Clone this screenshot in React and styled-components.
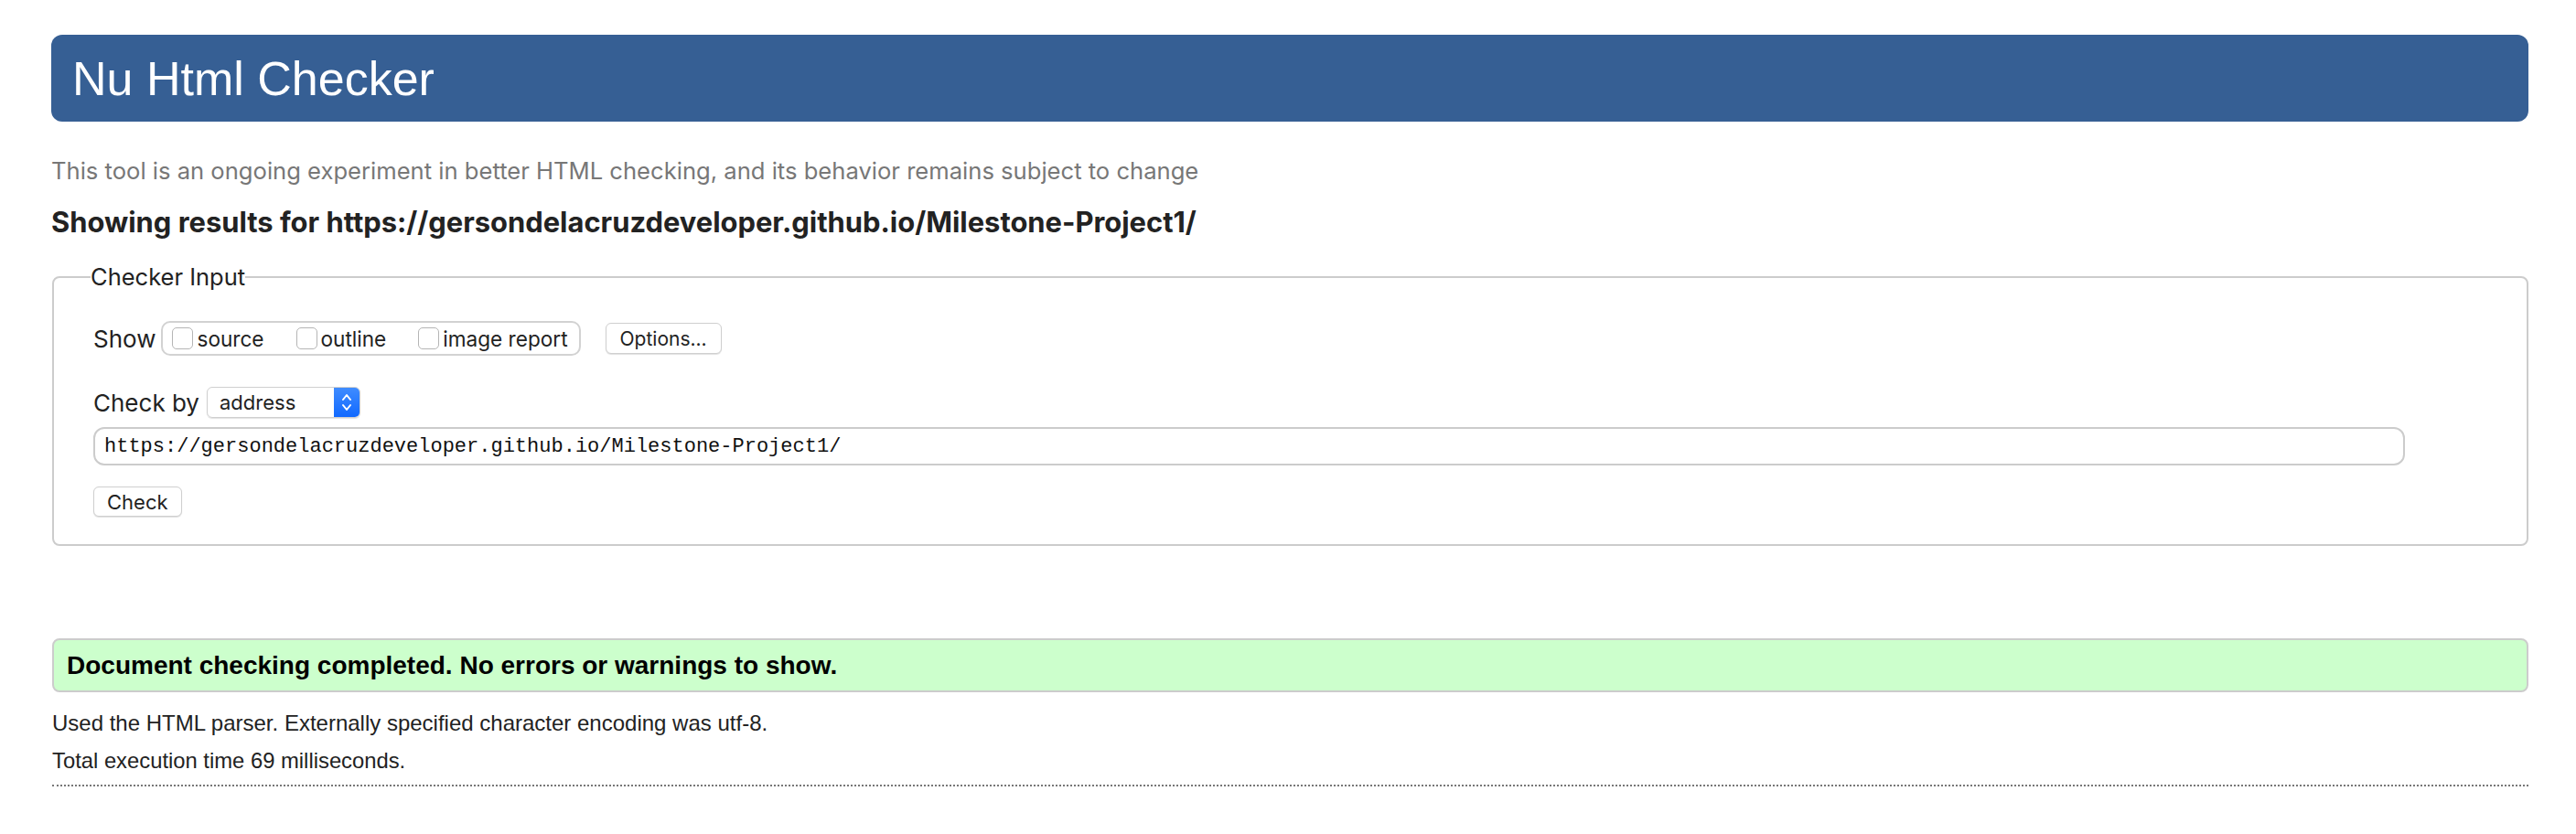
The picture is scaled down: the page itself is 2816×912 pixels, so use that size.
import React from "react";
import styled, { createGlobalStyle } from "styled-components";

const GlobalStyle = createGlobalStyle`
  html, body {
    margin: 0;
    padding: 0;
    background: #fff;
  }
  body {
    font-family: "Liberation Sans", Arial, sans-serif;
    color: #222;
  }
`;

const Page = styled.div`
  padding: 38px 52px 40px 56px;
`;

const Banner = styled.header`
  display: flex;
  align-items: center;
  height: 95px;
  padding-left: 23px;
  background: #365f94;
  border-radius: 12px;
`;

const BannerTitle = styled.h1`
  margin: 0;
  font-family: "Liberation Sans", Arial, sans-serif;
  font-weight: 400;
  font-size: 52px;
  line-height: 1;
  color: #fff;
`;

const Intro = styled.p`
  margin: 39px 0 0;
  font-family: Inter, "Liberation Sans", sans-serif;
  font-size: 25.6px;
  line-height: 30px;
  color: #777;
`;

const ResultsFor = styled.h2`
  margin: 23px 0 0;
  font-family: Inter, "Liberation Sans", sans-serif;
  font-weight: 700;
  font-size: 30.9px;
  line-height: 36px;
  color: #222;
`;

const InputSet = styled.fieldset`
  margin: 27px 0 0 1px;
  padding: 0 40px 30px 43px;
  border: 2px solid #ccc;
  border-radius: 8px;
  font-family: Inter, "Liberation Sans", sans-serif;
  color: #222;
`;

const Legend = styled.legend`
  margin-left: -3px;
  padding: 0;
  font-size: 25.5px;
  line-height: 30px;
`;

const Row = styled.div`
  display: flex;
  align-items: center;
  margin-top: ${(p) => p.$top || 0}px;
`;

const Label = styled.span`
  font-size: 26px;
  margin-right: ${(p) => p.$gap || 6}px;
`;

const ShowGroup = styled.div`
  display: flex;
  align-items: center;
  height: 38px;
  box-sizing: border-box;
  padding: 0 12px 0 10px;
  border: 2px solid #d2d2d2;
  border-radius: 10px;
`;

const Choice = styled.label`
  display: flex;
  align-items: center;
  font-size: 22.6px;
  margin-right: ${(p) => (p.$last ? 0 : 35)}px;
`;

const Box = styled.span`
  width: 21px;
  height: 22px;
  margin-right: 4px;
  border: 1px solid #b5b5b5;
  border-radius: 5px;
  background: #fff;
`;

const Button = styled.button`
  height: ${(p) => p.$h || 34}px;
  padding: 0 ${(p) => p.$pad || 14}px;
  margin-left: ${(p) => p.$left || 0}px;
  border: 1px solid #cfcfcf;
  border-radius: 6px;
  background: #fff;
  box-shadow: 0 1px 1px rgba(0, 0, 0, 0.12);
  font-family: Inter, "Liberation Sans", sans-serif;
  font-size: ${(p) => p.$size || 22}px;
  color: #222;
`;

const Select = styled.div`
  display: flex;
  width: 168px;
  height: 34px;
  box-sizing: border-box;
  border: 1px solid #cfcfcf;
  border-radius: 6px;
  box-shadow: 0 1px 1px rgba(0, 0, 0, 0.12);
  overflow: hidden;
`;

const SelectText = styled.span`
  flex: 1;
  display: flex;
  align-items: center;
  padding-left: 13px;
  font-size: 22px;
`;

const Stepper = styled.span`
  width: 28px;
  display: flex;
  align-items: center;
  justify-content: center;
  background: linear-gradient(#3f8cff, #1169ff);
`;

const UrlInput = styled.div`
  display: flex;
  align-items: center;
  width: 2527px;
  height: 42px;
  box-sizing: border-box;
  margin-top: 10px;
  padding-left: 10px;
  border: 2px solid #ccc;
  border-radius: 12px;
  font-family: "Liberation Mono", "DejaVu Sans Mono", monospace;
  font-size: 22px;
  color: #111;
`;

const Success = styled.div`
  margin-top: 101px;
  height: 59px;
  box-sizing: border-box;
  display: flex;
  align-items: center;
  padding-left: 14px;
  margin-left: 1px;
  background: #ccffcc;
  border: 2px solid #ccc;
  border-radius: 8px;
  font-weight: 700;
  font-size: 28px;
  color: #000;
`;

const Note = styled.p`
  margin: ${(p) => p.$top}px 0 0 1px;
  font-size: ${(p) => p.$size}px;
  line-height: 26px;
  color: #222;
`;

const Rule = styled.hr`
  margin: 13px 0 0 1px;
  border: 0;
  border-top: 2px dotted #777;
`;

function Chevrons() {
  return (
    <svg width="12" height="24" viewBox="0 0 12 24" fill="none">
      <path d="M2 9 L6 4 L10 9" stroke="#fff" strokeWidth="2" strokeLinecap="round" strokeLinejoin="round" />
      <path d="M2 15 L6 20 L10 15" stroke="#fff" strokeWidth="2" strokeLinecap="round" strokeLinejoin="round" />
    </svg>
  );
}

export default function App() {
  return (
    <Page>
      <GlobalStyle />
      <Banner>
        <BannerTitle>Nu Html Checker</BannerTitle>
      </Banner>
      <Intro>
        This tool is an ongoing experiment in better HTML checking, and its behavior remains subject to change
      </Intro>
      <ResultsFor>Showing results for https://gersondelacruzdeveloper.github.io/Milestone-Project1/</ResultsFor>

      <InputSet>
        <Legend>Checker Input</Legend>
        <Row $top={33}>
          <Label>Show</Label>
          <ShowGroup>
            <Choice>
              <Box />
              source
            </Choice>
            <Choice>
              <Box />
              outline
            </Choice>
            <Choice $last>
              <Box />
              image report
            </Choice>
          </ShowGroup>
          <Button $left={27} $pad={15} $size={21}>Options...</Button>
        </Row>
        <Row $top={34}>
          <Label $gap={8}>Check by</Label>
          <Select>
            <SelectText>address</SelectText>
            <Stepper>
              <Chevrons />
            </Stepper>
          </Select>
        </Row>
        <UrlInput>https://gersondelacruzdeveloper.github.io/Milestone-Project1/</UrlInput>
        <Row $top={23}>
          <Button $h={33}>Check</Button>
        </Row>
      </InputSet>

      <Success>Document checking completed. No errors or warnings to show.</Success>
      <Note $top={21} $size={24}>Used the HTML parser. Externally specified character encoding was utf-8.</Note>
      <Note $top={15} $size={23.8}>Total execution time 69 milliseconds.</Note>
      <Rule />
    </Page>
  );
}
